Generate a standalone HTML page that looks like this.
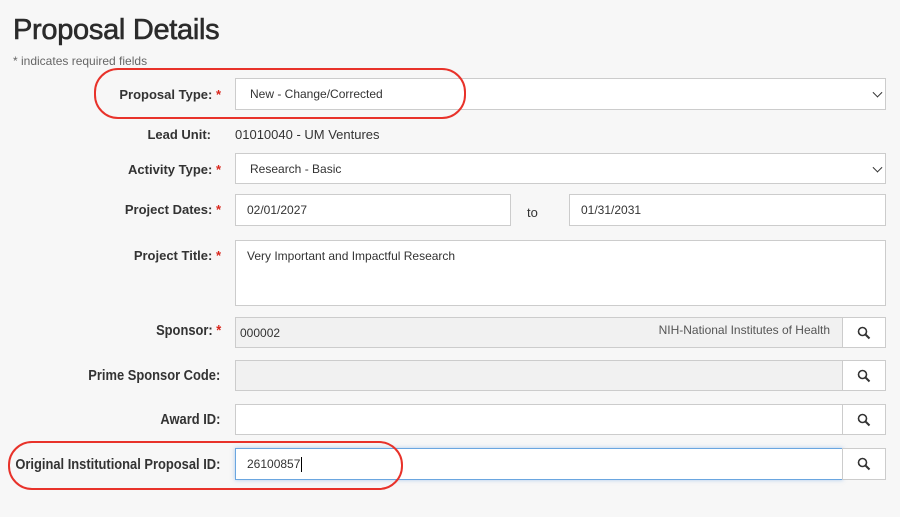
<!DOCTYPE html>
<html><head><style>
*{box-sizing:border-box;margin:0;padding:0}
body{width:900px;height:517px;background:#f7f7f7;font-family:"Liberation Sans",Arial,sans-serif;color:#333;position:relative;overflow:hidden}
.a{position:absolute}
h1{position:absolute;left:13px;top:14px;font-size:29px;font-weight:normal;color:#2b2b2b;-webkit-text-stroke:0.6px #2b2b2b;letter-spacing:-0.3px}
.req{left:13px;top:54px;font-size:12px;color:#666}
.lbl{position:absolute;right:679px;font-size:13px;font-weight:bold;color:#333;white-space:nowrap}
.lbl.n{right:680px;font-size:14.5px;transform:scaleX(0.89);transform-origin:right center}
.st{color:#d9261c}
.f{position:absolute;left:235px;background:#fff;border:1px solid #ccc;font-size:12px;color:#333;padding-left:11px;display:flex;align-items:center}
.sel::after{content:"";position:absolute;right:4px;top:50%;width:6px;height:6px;border-right:1.5px solid #333;border-bottom:1.5px solid #333;transform:translateY(-70%) rotate(45deg)}
.btn{position:absolute;left:842px;width:44px;background:#fff;border:1px solid #ccc;display:flex;align-items:center;justify-content:center}
.oval{position:absolute;border:2.5px solid #e8322a;border-radius:24px}
</style></head><body>
<h1>Proposal Details</h1>
<div class="a req">* indicates required fields</div>

<div class="lbl" style="top:87px">Proposal Type: <span class="st">*</span></div>
<div class="f sel" style="top:78px;width:651px;height:32px;padding-left:14px">New - Change/Corrected</div>

<div class="lbl" style="top:127px;right:689px">Lead Unit:</div>
<div class="a" style="left:235px;top:127px;font-size:13px">01010040 - UM Ventures</div>

<div class="lbl" style="top:162px">Activity Type: <span class="st">*</span></div>
<div class="f sel" style="top:153px;width:651px;height:31px;padding-left:14px">Research - Basic</div>

<div class="lbl" style="top:202px">Project Dates: <span class="st">*</span></div>
<div class="f" style="top:194px;width:276px;height:32px">02/01/2027</div>
<div class="a" style="left:527px;top:205px;font-size:13px">to</div>
<div class="f" style="left:569px;top:194px;width:317px;height:32px">01/31/2031</div>

<div class="lbl" style="top:248px">Project Title: <span class="st">*</span></div>
<div class="f" style="top:240px;width:651px;height:66px;align-items:flex-start;padding-top:8px">Very Important and Impactful Research</div>

<div class="lbl n" style="top:323px;right:679px">Sponsor: <span class="st">*</span></div>
<div class="f" style="top:317px;width:608px;height:31px;background:#f1f1f1;padding-left:4px">000002<span style="margin-left:auto;margin-right:12px;margin-top:-6px;color:#555">NIH-National Institutes of Health</span></div>
<div class="btn" style="top:317px;height:31px"><svg width="14" height="14" viewBox="0 0 14 14"><circle cx="5.5" cy="5.5" r="4" fill="none" stroke="#333" stroke-width="1.6"/><path d="M8.5 8.5L12.5 12.5" stroke="#333" stroke-width="2"/></svg></div>

<div class="lbl n" style="top:368px">Prime Sponsor Code:</div>
<div class="f" style="top:360px;width:608px;height:31px;background:#f1f1f1"></div>
<div class="btn" style="top:360px;height:31px"><svg width="14" height="14" viewBox="0 0 14 14"><circle cx="5.5" cy="5.5" r="4" fill="none" stroke="#333" stroke-width="1.6"/><path d="M8.5 8.5L12.5 12.5" stroke="#333" stroke-width="2"/></svg></div>

<div class="lbl n" style="top:412px">Award ID:</div>
<div class="f" style="top:404px;width:608px;height:31px"></div>
<div class="btn" style="top:404px;height:31px"><svg width="14" height="14" viewBox="0 0 14 14"><circle cx="5.5" cy="5.5" r="4" fill="none" stroke="#333" stroke-width="1.6"/><path d="M8.5 8.5L12.5 12.5" stroke="#333" stroke-width="2"/></svg></div>

<div class="lbl n" style="top:457px">Original Institutional Proposal ID:</div>
<div class="f" style="top:448px;width:608px;height:32px;border-color:#6aa6e0;box-shadow:0 0 4px rgba(100,160,230,.5)">26100857<span style="display:inline-block;width:1px;height:15px;background:#000;margin-left:1px"></span></div>
<div class="btn" style="top:448px;height:32px"><svg width="14" height="14" viewBox="0 0 14 14"><circle cx="5.5" cy="5.5" r="4" fill="none" stroke="#333" stroke-width="1.6"/><path d="M8.5 8.5L12.5 12.5" stroke="#333" stroke-width="2"/></svg></div>

<div class="oval" style="left:94px;top:68px;width:372px;height:51px"></div>
<div class="oval" style="left:8px;top:441px;width:395px;height:49px"></div>
</body></html>
